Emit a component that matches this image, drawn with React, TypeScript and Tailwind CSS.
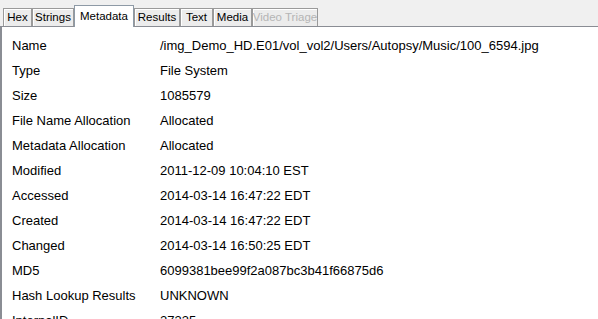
import React from "react";

const tabs = [
  { name: "Hex", w: 29 },
  { name: "Strings", w: 42 },
  { name: "Metadata", w: 60, active: true },
  { name: "Results", w: 46 },
  { name: "Text", w: 33 },
  { name: "Media", w: 39 },
  { name: "Video Triage", w: 66, disabled: true },
];

const rows: [string, string][] = [
  ["Name", "/img_Demo_HD.E01/vol_vol2/Users/Autopsy/Music/100_6594.jpg"],
  ["Type", "File System"],
  ["Size", "1085579"],
  ["File Name Allocation", "Allocated"],
  ["Metadata Allocation", "Allocated"],
  ["Modified", "2011-12-09 10:04:10 EST"],
  ["Accessed", "2014-03-14 16:47:22 EDT"],
  ["Created", "2014-03-14 16:47:22 EDT"],
  ["Changed", "2014-03-14 16:50:25 EDT"],
  ["MD5", "6099381bee99f2a087bc3b41f66875d6"],
  ["Hash Lookup Results", "UNKNOWN"],
  ["InternalID", "27335"],
];

export default function App() {
  return (
    <div className="w-[598px] h-[319px] overflow-hidden bg-[#f0f0f0] flex flex-col" style={{ fontFamily: '"Liberation Sans", Arial, sans-serif' }}>
      <div className="h-[26px] flex items-end pl-[3px] shrink-0 relative z-10">
        {tabs.map((t) =>
          t.active ? (
            <div
              key={t.name}
              className="h-[22px] -mb-[1px] bg-white border border-b-0 border-[#8e9aa6] flex items-start justify-center pt-[2px] text-[11.5px] text-black whitespace-nowrap"
              style={{ width: t.w }}
            >
              {t.name}
            </div>
          ) : (
            <div
              key={t.name}
              className={`h-[18px] bg-[#ececec] border border-b-0 border-[#9a9a9a] flex items-center justify-center text-[11.5px] whitespace-nowrap shadow-[inset_1px_1px_0_#ffffff] ${t.disabled ? "text-[#b5b5b5]" : "text-black"}`}
              style={{ width: t.w }}
            >
              {t.name}
            </div>
          )
        )}
      </div>
      <div className="flex-1 bg-white border-t border-l-2 border-t-[#8a8d94] border-l-[#8a8d94] pt-[6px] text-[13px] text-black">
        {rows.map(([k, v]) => (
          <div key={k} className="h-[25px] flex items-center">
            <div className="w-[158px] pl-[10px] shrink-0">{k}</div>
            <div className="whitespace-nowrap">{v}</div>
          </div>
        ))}
      </div>
    </div>
  );
}
